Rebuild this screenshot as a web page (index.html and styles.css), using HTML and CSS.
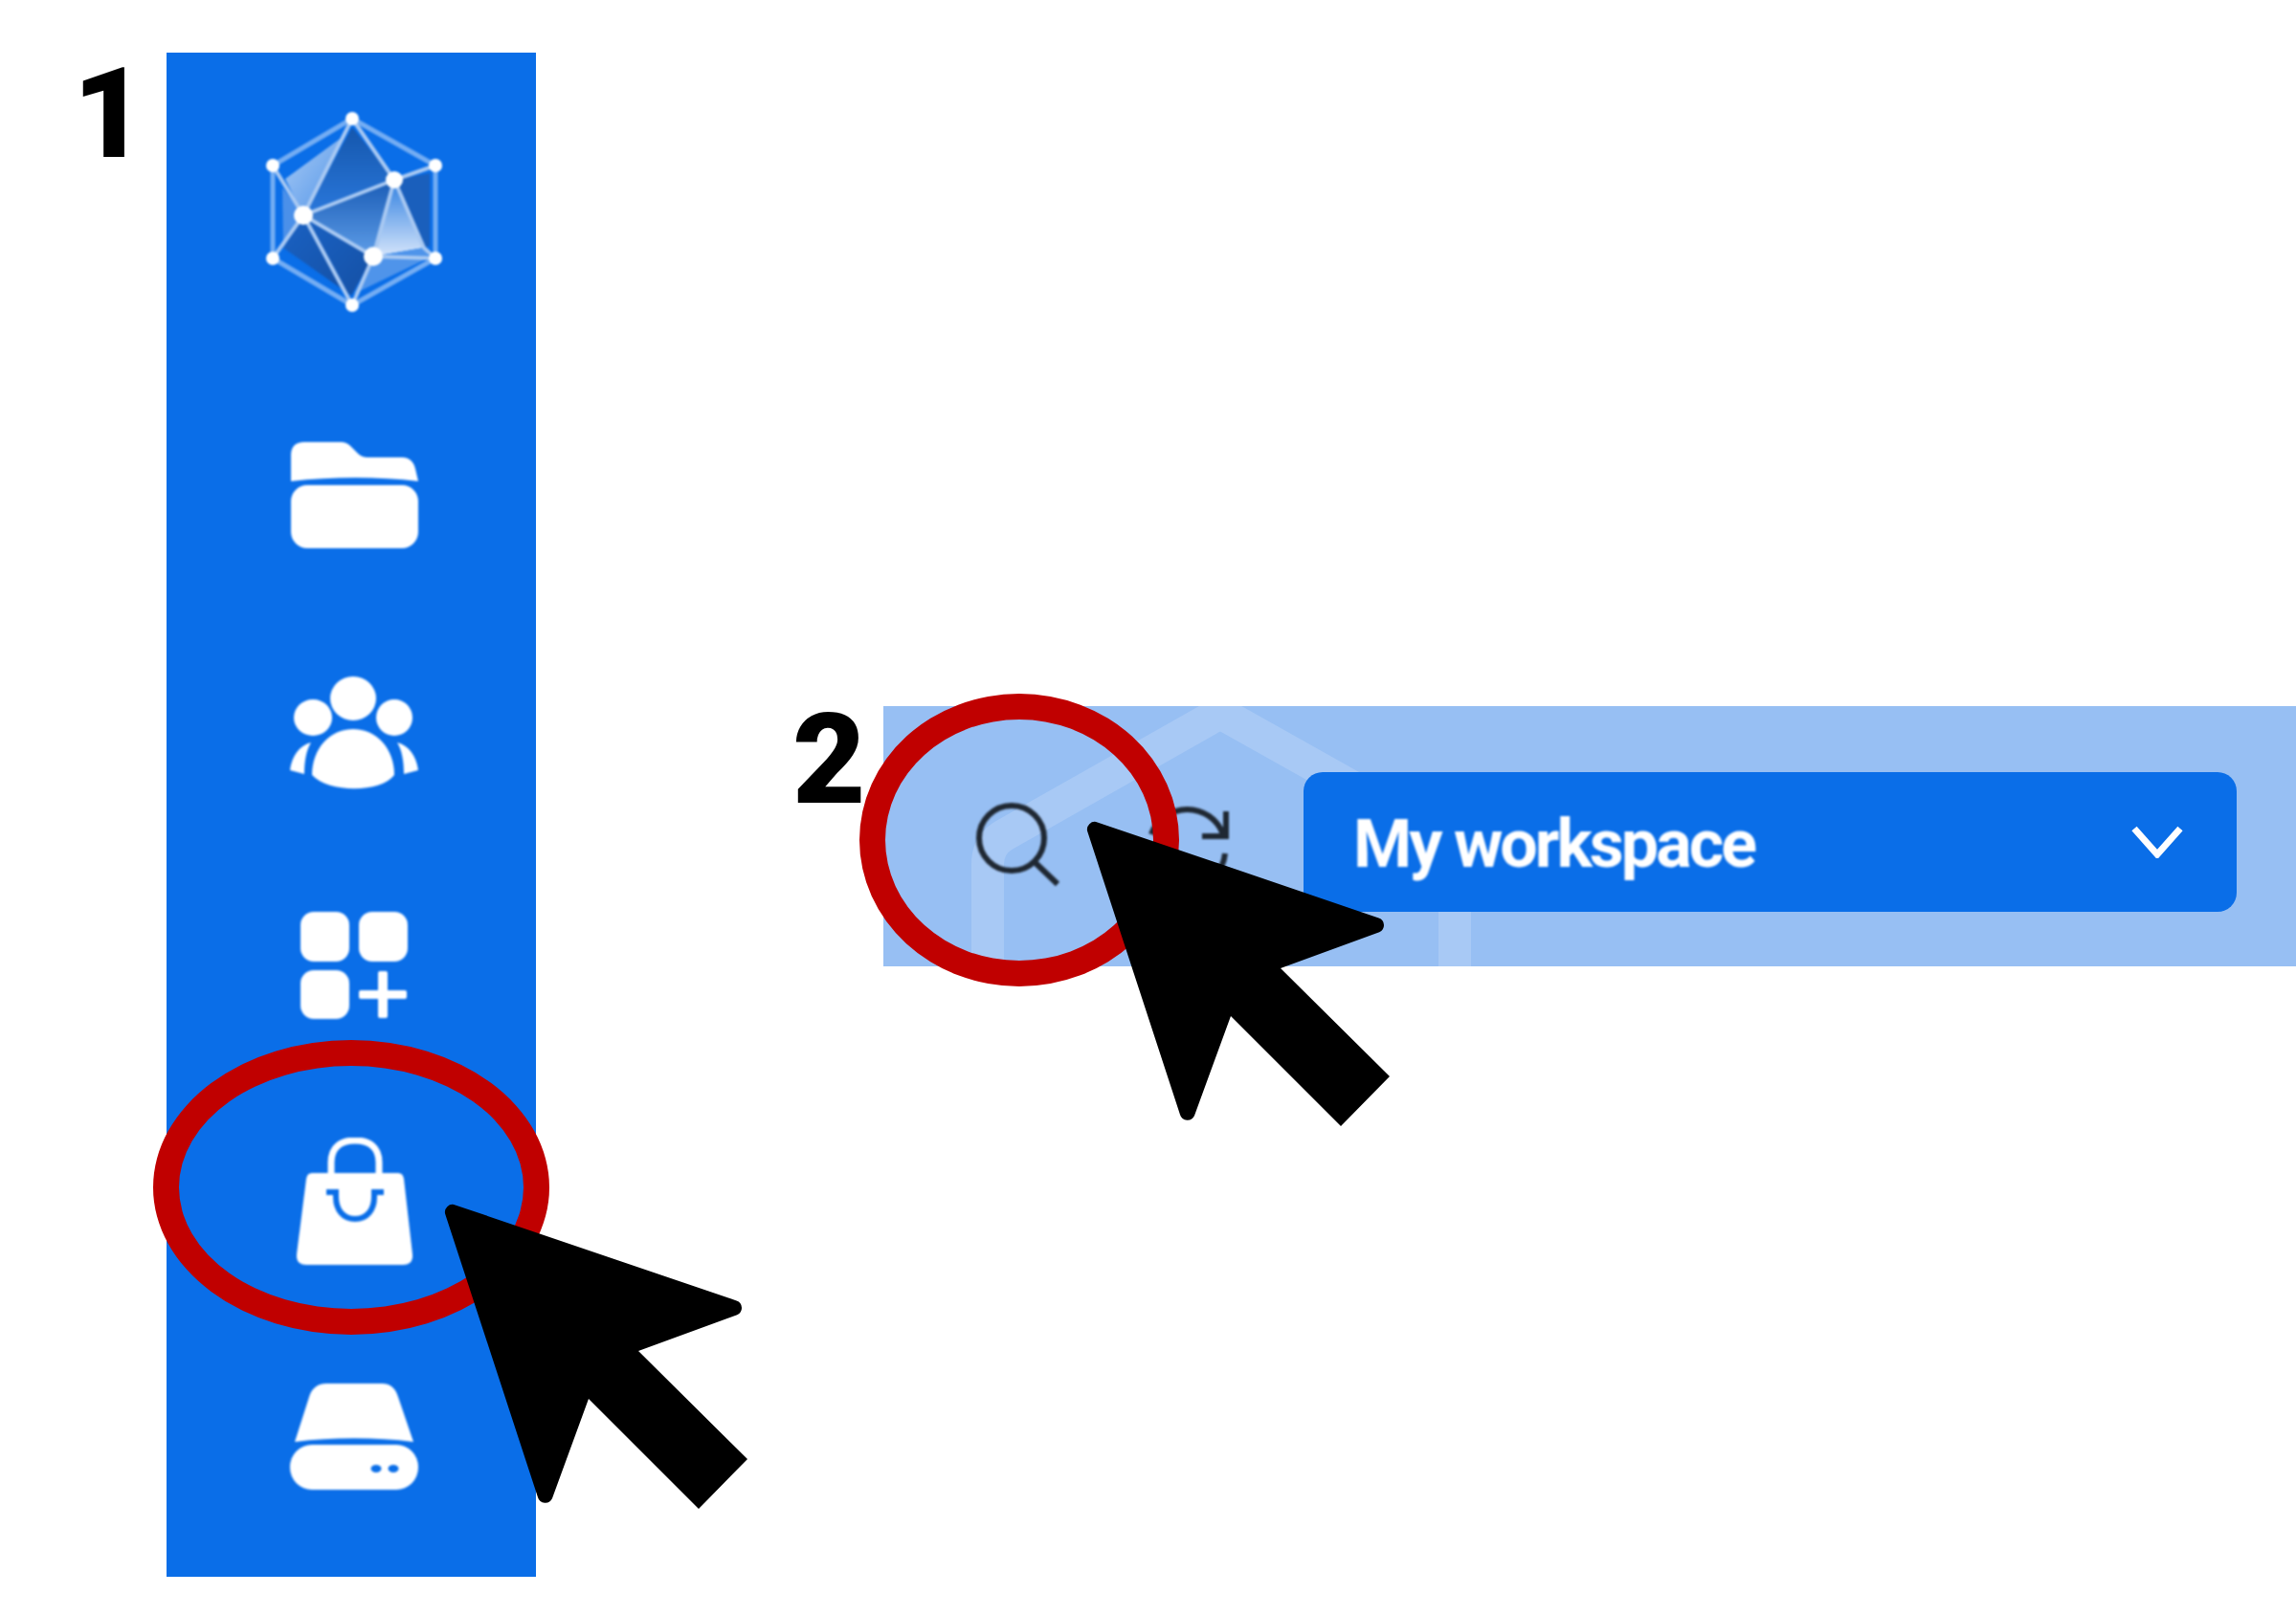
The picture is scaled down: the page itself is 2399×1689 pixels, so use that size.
FILE: index.html
```html
<!DOCTYPE html>
<html lang="en">
<head>
  <meta charset="UTF-8" />
  <title>Workspace steps</title>
  <link rel="stylesheet" href="styles.css">
</head>
<body>
  <div class="page">
    <nav class="sidebar">
      <svg class="logo" viewBox="272 110 196 222">
        <defs>
          <linearGradient id="facetDark" x1="0" y1="0" x2="0" y2="1">
            <stop offset="0" stop-color="#1557ad"/>
            <stop offset="1" stop-color="#2a78dc"/>
          </linearGradient>
          <linearGradient id="facetMid" x1="0" y1="0" x2="0" y2="1">
            <stop offset="0" stop-color="#1a5cb6"/>
            <stop offset="1" stop-color="#5f9ee8"/>
          </linearGradient>
          <linearGradient id="facetLow" x1="0" y1="0" x2="1" y2="1">
            <stop offset="0" stop-color="#1a62c4"/>
            <stop offset="1" stop-color="#1550a4"/>
          </linearGradient>
          <linearGradient id="facetLight" x1="0" y1="0" x2="1" y2="1">
            <stop offset="0" stop-color="#a9cbf5"/>
            <stop offset="1" stop-color="#4f93e8"/>
          </linearGradient>
          <linearGradient id="facetBright" x1="0" y1="0" x2="0" y2="1">
            <stop offset="0" stop-color="#2f7fe0"/>
            <stop offset="1" stop-color="#d5e5fb"/>
          </linearGradient>
        </defs>
        <polygon points="298,186 358,142 317,224" fill="url(#facetLight)"/>
        <polygon points="295,195 317,224 296,258" fill="#4b90e9"/>
        <polygon points="368,132 412,187 317,224" fill="url(#facetDark)"/>
        <polygon points="317,224 412,187 390,267" fill="url(#facetMid)"/>
        <polygon points="296,258 317,224 367,308" fill="url(#facetLow)"/>
        <polygon points="317,224 390,267 367,308" fill="url(#facetLow)"/>
        <polygon points="412,187 449,180 449,256 443,258" fill="#1a5fbc"/>
        <polygon points="412,187 443,258 390,267" fill="url(#facetBright)"/>
        <polygon points="390,267 443,258 449,268 370,306" fill="#4f94ea"/>
        <g class="logo-edges">
          <polygon points="368,123 455,172 455,269 368,318 285,269 285,172"/>
        </g>
        <g class="logo-lines">
          <path d="M368 123 L412 187 L455 172 M412 187 L317 224 L368 123 M412 187 L443 258 L455 269 M412 187 L390 267 M317 224 L390 267 L455 269 M317 224 L368 318 M390 267 L368 318 M317 224 L285 172 M317 224 L285 269"/>
        </g>
        <g class="logo-dots">
          <circle cx="368" cy="123" r="7"/>
          <circle cx="455" cy="172" r="7"/>
          <circle cx="455" cy="269" r="7"/>
          <circle cx="368" cy="318" r="7"/>
          <circle cx="285" cy="269" r="7"/>
          <circle cx="285" cy="172" r="7"/>
          <circle cx="412" cy="187" r="9"/>
          <circle cx="317" cy="224" r="10"/>
          <circle cx="390" cy="267" r="10"/>
        </g>
      </svg>

      <div class="nav-item">
        <svg class="icon-folder" viewBox="0 0 133 111">
          <path d="M0 41 V14 Q0 0 14 0 H52 Q58 0 62 4 L70 12 Q74 16 80 16 H116 Q127 16 130 28 L133 41 C90 36 45 36 0 41Z"/>
          <rect x="0" y="45" width="133" height="66" rx="17"/>
        </svg>
      </div>
      <div class="nav-item">
        <svg class="icon-people" viewBox="0 0 134 119">
          <ellipse cx="66" cy="24" rx="24" ry="23"/>
          <ellipse cx="24" cy="44" rx="20" ry="19"/>
          <ellipse cx="109" cy="44" rx="19" ry="19"/>
          <path d="M23 104 C23 76 42 56 66 56 C90 56 109 76 109 104 C95 123 40 123 23 104Z"/>
          <path d="M22 70 C10 73 2 84 0 99 L15 103 C15 90 17 78 22 70Z"/>
          <path d="M112 70 C124 73 132 84 134 99 L119 103 C119 90 117 78 112 70Z"/>
        </svg>
      </div>
      <div class="nav-item">
        <svg class="icon-apps" viewBox="0 0 112 112">
          <rect x="0" y="0" width="51" height="52" rx="14"/>
          <rect x="61" y="0" width="51" height="52" rx="14"/>
          <rect x="0" y="61" width="51" height="51" rx="14"/>
          <rect x="61" y="82" width="50" height="9" rx="2"/>
          <rect x="81" y="62" width="10" height="49" rx="2"/>
        </svg>
      </div>
      <div class="nav-item">
        <svg class="icon-bag" viewBox="0 0 121 133">
          <path class="bag-handle" d="M36 38 V26 C36 9 47 3 61 3 C75 3 86 9 86 26 V38"/>
          <path d="M16 37 H106 Q111 37 112 43 L121 122 Q122 133 111 133 H10 Q-1 133 0 122 L10 43 Q11 37 16 37Z"/>
          <path class="bag-cut" d="M31 57 H41 V62 C41 76 49 85 61 85 C73 85 81 76 81 62 V57 H91"/>
        </svg>
      </div>
      <div class="nav-item">
        <svg class="icon-drive" viewBox="0 0 134 111">
          <path d="M5 61 L20 14 C23 4 30 0 38 0 H96 C104 0 110 4 113 14 L129 61 C90 56 44 56 5 61Z"/>
          <rect x="0" y="64" width="134" height="47" rx="23"/>
          <ellipse class="drive-led" cx="90" cy="89" rx="5.5" ry="4"/>
          <ellipse class="drive-led" cx="108" cy="89" rx="5.5" ry="4"/>
        </svg>
      </div>
    </nav>

    <section class="toolbar">
      <svg class="toolbar-bg" viewBox="0 0 1476 272">
        <path d="M109 272 V165 Q109 145 126 135 L352 7 L580 135 Q597 145 597 165 V272"/>
      </svg>
      <svg class="icon-search" viewBox="0 0 90 92">
        <circle cx="39" cy="40" r="34"/>
        <path d="M64 66 L87 88"/>
      </svg>
      <svg class="icon-refresh" viewBox="0 0 95 92">
        <path d="M8 36 A40 40 0 0 1 83 36"/>
        <path d="M86 12 V38 H61"/>
        <path d="M85 56 A40 40 0 0 1 6 60"/>
      </svg>
      <div class="workspace-select">
        <span class="workspace-name">My workspace</span>
        <svg class="chevron" viewBox="0 0 54 34">
          <path d="M3 3 L27 30 L51 3"/>
        </svg>
      </div>
    </section>
  </div>

  <!-- step markers drawn over the screenshots -->
  <div class="step-num step-one">1</div>
  <div class="step-num step-two">2</div>
  <div class="ring ring-one"></div>
  <div class="ring ring-two"></div>
  <svg class="pointer pointer-one" viewBox="-4 -4 324 324">
    <path d="M10.6 .4 L304.6 100.4 A8 8 0 0 1 305.2 115.3 L202 153 L316 266 L265 318 L150 203 L112 307 A8 8 0 0 1 97 306 L.4 10.6 A8 8 0 0 1 10.6 .4Z"/>
  </svg>
  <svg class="pointer pointer-two" viewBox="-4 -4 324 324">
    <path d="M10.6 .4 L304.6 100.4 A8 8 0 0 1 305.2 115.3 L202 153 L316 266 L265 318 L150 203 L112 307 A8 8 0 0 1 97 306 L.4 10.6 A8 8 0 0 1 10.6 .4Z"/>
  </svg>
</body>
</html>
```

FILE: styles.css
```css
html, body {
  margin: 0;
  background-color: #fff;
}
body {
  position: relative;
  width: 2399px;
  height: 1689px;
  overflow: hidden;
  font-family: "Liberation Sans", Arial, sans-serif;
}
.page {
  display: flex;
  align-items: flex-start;
  padding: 55px 0 0 174px;
}

.sidebar {
  display: flex;
  flex-direction: column;
  align-items: center;
  flex: none;
  box-sizing: border-box;
  width: 386px;
  height: 1593px;
  padding: 56px 0 0 6px;
  background-color: #0a6ee8;
}
.logo {
  width: 196px;
  height: 222px;
  margin-bottom: 61px;
  filter: blur(1.2px);
}
.logo-edges polygon {
  fill: none;
  stroke: #74adf3;
  stroke-width: 5;
}
.logo-lines path {
  fill: none;
  stroke: #a9c9f2;
  stroke-width: 4;
}
.logo-dots circle {
  fill: #fff;
}
.nav-item {
  display: flex;
  align-items: center;
  justify-content: center;
  height: 246px;
}
.nav-item svg {
  fill: #fff;
  filter: blur(1.2px);
}
.icon-folder { width: 133px; height: 111px; }
.icon-people { width: 134px; height: 119px; margin-top: 4px; }
.icon-apps { width: 112px; height: 112px; }
.icon-bag { width: 121px; height: 133px; }
.icon-drive { width: 134px; height: 111px; }
.bag-handle {
  fill: none;
  stroke: #fff;
  stroke-width: 7;
}
.bag-cut {
  fill: none;
  stroke: #0a6ee8;
  stroke-width: 6;
}
.drive-led {
  fill: #0a6ee8;
}

.toolbar {
  position: relative;
  display: flex;
  align-items: center;
  flex: 1;
  box-sizing: border-box;
  height: 272px;
  margin: 683px 0 0 363px;
  padding: 69px 62px 57px 95px;
  overflow: hidden;
  background-color: #97bff3;
}
.toolbar-bg {
  position: absolute;
  left: 0;
  top: 0;
  width: 1476px;
  height: 272px;
  fill: none;
  stroke: #a8c9f5;
  stroke-width: 34;
}
.icon-search, .icon-refresh {
  position: relative;
  flex: none;
  margin-top: 4px;
  fill: none;
  stroke: #1f2833;
  stroke-width: 6;
  filter: blur(0.8px);
}
.icon-search {
  width: 90px;
  height: 92px;
}
.icon-refresh {
  width: 95px;
  height: 92px;
  margin-left: 87px;
}
.workspace-select {
  position: relative;
  display: flex;
  align-items: center;
  justify-content: space-between;
  flex: 1;
  box-sizing: border-box;
  height: 146px;
  margin-left: 72px;
  padding: 0 56px 0 52px;
  border-radius: 20px;
  background-color: #0a6ee8;
}
.workspace-name {
  margin-top: 4px;
  color: #fff;
  font-family: Roboto, "Liberation Sans", sans-serif;
  font-size: 70px;
  font-weight: 700;
  letter-spacing: -3px;
  filter: blur(1px);
}
.chevron {
  width: 54px;
  height: 34px;
  fill: none;
  stroke: #fff;
  stroke-width: 7;
}

.step-num {
  position: absolute;
  color: #000;
  font-family: Roboto, "Liberation Sans", sans-serif;
  font-size: 132px;
  font-weight: 900;
  line-height: 1;
}
.step-one { left: 76px; top: 53px; }
.step-two { left: 828px; top: 728px; }
.ring {
  position: absolute;
  box-sizing: border-box;
  border: 27px solid #c00000;
  border-radius: 50%;
}
.ring-one { left: 160px; top: 1087px; width: 414px; height: 308px; }
.ring-two { left: 898px; top: 725px; width: 334px; height: 306px; }
.pointer {
  position: absolute;
  width: 324px;
  height: 324px;
  fill: #000;
}
.pointer-one { left: 461px; top: 1255px; }
.pointer-two { left: 1132px; top: 855px; }
```
